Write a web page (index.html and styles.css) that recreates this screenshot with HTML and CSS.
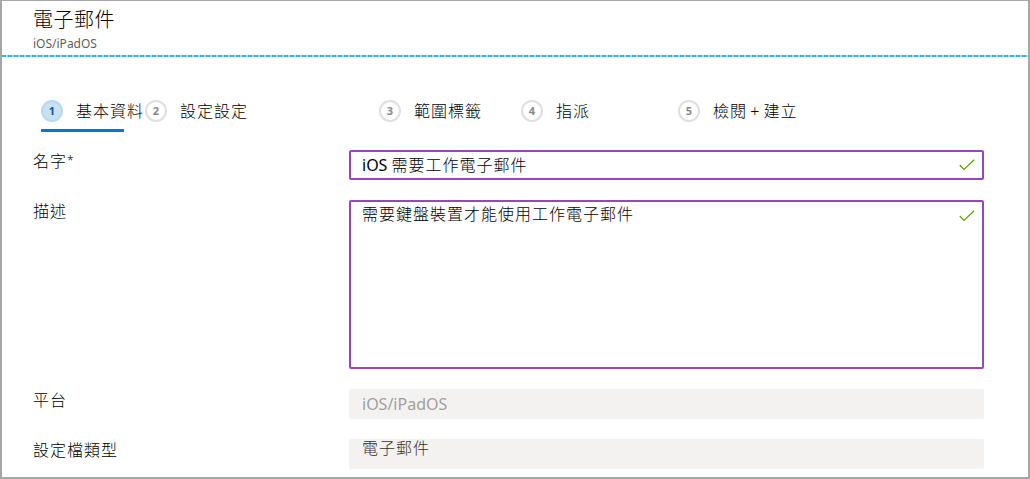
FILE: index.html
```html
<!DOCTYPE html>
<html lang="zh-Hant">
<head>
<meta charset="utf-8">
<title>電子郵件</title>
<link rel="stylesheet" href="styles.css">
</head>
<body>
<div class="frame">
  <header class="header">
    <div class="title">電子郵件</div>
    <div class="subtitle">iOS/iPadOS</div>
  </header>
  <div class="divider"></div>
  <nav class="tabs">
    <div class="tab active">
      <div class="tab-head"><span class="step">1</span><span class="tab-label">基本資料</span></div>
      <div class="tab-bar"></div>
    </div>
    <div class="tab">
      <div class="tab-head"><span class="step">2</span><span class="tab-label">設定設定</span></div>
      <div class="tab-bar"></div>
    </div>
    <div class="tab">
      <div class="tab-head"><span class="step">3</span><span class="tab-label">範圍標籤</span></div>
      <div class="tab-bar"></div>
    </div>
    <div class="tab">
      <div class="tab-head"><span class="step">4</span><span class="tab-label">指派</span></div>
      <div class="tab-bar"></div>
    </div>
    <div class="tab">
      <div class="tab-head"><span class="step">5</span><span class="tab-label">檢閱 + 建立</span></div>
      <div class="tab-bar"></div>
    </div>
  </nav>
  <div class="form">
    <div class="row">
      <div class="label">名字<span class="req">*</span></div>
      <div class="field input">
        <span class="value"><span class="latin">iOS </span>需要工作電子郵件</span>
        <svg class="check" width="16" height="12" viewBox="0 0 16 12"><polyline points="0.8,6 5,10.5 15.2,0.8" fill="none" stroke="#57a300" stroke-width="1.2"/></svg>
      </div>
    </div>
    <div class="row">
      <div class="label">描述</div>
      <div class="field textarea">
        <span class="value">需要鍵盤裝置才能使用工作電子郵件</span>
        <svg class="check" width="16" height="12" viewBox="0 0 16 12"><polyline points="0.8,6 5,10.5 15.2,0.8" fill="none" stroke="#57a300" stroke-width="1.2"/></svg>
      </div>
    </div>
    <div class="row">
      <div class="label">平台</div>
      <div class="field readonly platform">iOS/iPadOS</div>
    </div>
    <div class="row">
      <div class="label">設定檔類型</div>
      <div class="field readonly profile">電子郵件</div>
    </div>
  </div>
</div>
</body>
</html>
```

FILE: styles.css
```css
* { box-sizing: border-box; }
html, body { margin: 0; padding: 0; background: #fff; }
body {
  font-family: "Noto Sans", "Noto Sans CJK TC", sans-serif;
  color: #000;
}
.frame {
  width: 1030px;
  height: 479px;
  border: 2px solid #a6a6a6;
  border-top-width: 1px;
  overflow: hidden;
}
.header {
  padding: 5px 0 3px 31px;
}
.title {
  font-size: 20px;
  line-height: 28px;
  letter-spacing: 0.5px;
  font-weight: 300;
  color: #000;
}
.subtitle {
  margin-top: 2px;
  font-size: 12px;
  line-height: 16px;
  color: #605e5c;
}
.divider {
  height: 2px;
  background: repeating-linear-gradient(90deg, #2bb5ea 0 4px, #9fdcf5 4px 6px);
}
.tabs {
  margin-top: 43px;
  padding-left: 39px;
  display: grid;
  grid-template-columns: 104px 234px 142px 157px auto;
}
.tab {
  display: flex;
  flex-direction: column;
}
.tab-head {
  display: flex;
  align-items: center;
  gap: 13px;
  height: 22px;
  white-space: nowrap;
}
.step {
  width: 22px;
  height: 22px;
  flex: none;
  border-radius: 50%;
  border: 2px solid #e1dfdd;
  background: #fff;
  color: #8a8886;
  font-size: 11px;
  font-weight: 700;
  line-height: 18px;
  text-align: center;
}
.tab.active .step {
  background: #c7e0f4;
  border-color: #b9d8f2;
  color: #005a9e;
}
.tab-label {
  font-size: 16px;
  line-height: 22px;
  letter-spacing: 1px;
  word-spacing: -2px;
  font-weight: 300;
  color: #000;
}
.tab-bar {
  margin-top: 7px;
  width: 83px;
  height: 3px;
  background: transparent;
}
.tab.active .tab-bar { background: #0078d4; }

.form {
  margin-top: 18px;
  padding-left: 31px;
  display: flex;
  flex-direction: column;
  gap: 20px;
}
.row {
  display: flex;
  align-items: flex-start;
}
.label {
  width: 316px;
  flex: none;
  font-size: 16px;
  line-height: 22px;
  letter-spacing: 1px;
  font-weight: 300;
  color: #000;
}
.req {
  font-size: 12px;
  vertical-align: 2px;
  letter-spacing: 0;
}
.field {
  width: 635px;
  flex: none;
  font-size: 16px;
  border-radius: 2px;
}
.input, .textarea {
  display: flex;
  border: 2px solid #9a45b8;
  padding: 0 7px 0 11px;
  color: #000;
}
.input {
  height: 30px;
  align-items: center;
}
.textarea {
  height: 169px;
  align-items: flex-start;
  padding-top: 1px;
}
.value {
  flex: 1;
  line-height: 22px;
  letter-spacing: 1px;
  font-weight: 300;
}
.latin {
  letter-spacing: 0;
  font-weight: 400;
}
.check { flex: none; }
.textarea .check { margin-top: 7px; }
.readonly {
  height: 30px;
  background: #f3f2f1;
  padding-left: 13px;
}
.platform {
  line-height: 30px;
  color: #a19f9d;
}
.profile {
  line-height: 18px;
  letter-spacing: 1px;
  font-weight: 300;
  color: #323130;
}
```
